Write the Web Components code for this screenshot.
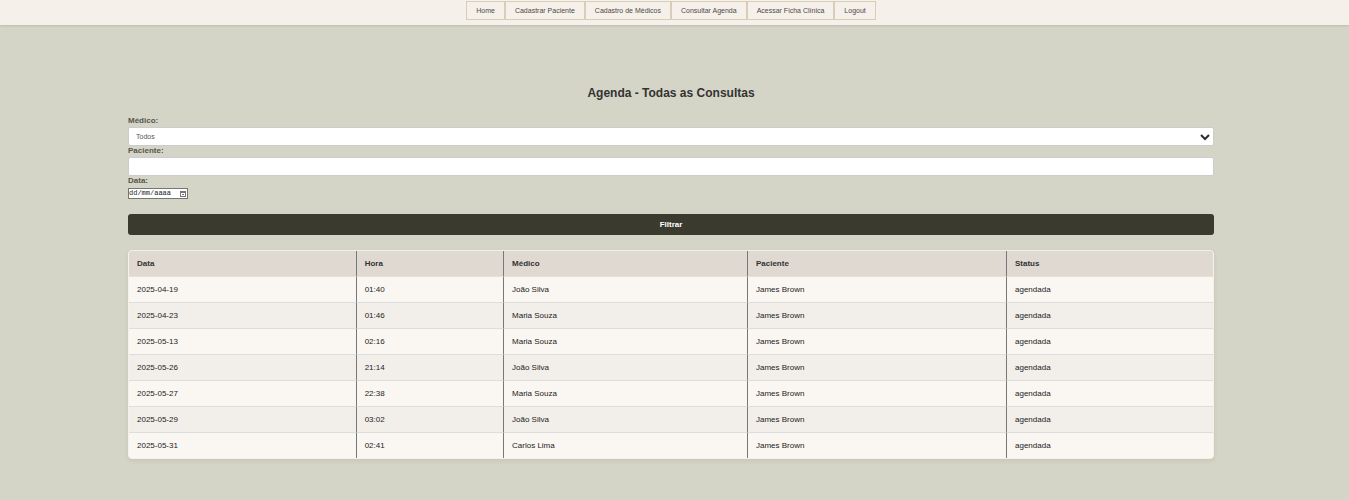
<!DOCTYPE html>
<html lang="pt-BR">
<head>
<meta charset="utf-8">
<meta name="viewport" content="width=device-width, initial-scale=1">
<title>Agenda - Todas as Consultas</title>
<style>
  html { background: #d5d5c7; }
  body { margin: 0; font-family: "Liberation Sans", Arial, sans-serif; color: #3a3a2e; }
</style>
</head>
<body>
<agenda-page>
  <nav-bar slot="nav">
    <nav-item href="#home">Home</nav-item>
    <nav-item href="#paciente">Cadastrar Paciente</nav-item>
    <nav-item href="#medicos">Cadastro de Médicos</nav-item>
    <nav-item href="#agenda">Consultar Agenda</nav-item>
    <nav-item href="#ficha">Acessar Ficha Clínica</nav-item>
    <nav-item href="#logout">Logout</nav-item>
  </nav-bar>
  <span slot="title">Agenda - Todas as Consultas</span>
  <filter-form></filter-form>
  <agenda-table></agenda-table>
</agenda-page>

<script>
  class BaseElement extends HTMLElement {
    constructor() {
      super();
      this.attachShadow({ mode: "open" });
    }
    connectedCallback() {
      this.shadowRoot.innerHTML = this.render();
    }
  }

  customElements.define("agenda-page", class extends BaseElement {
    render() {
      return `
        <style>
          :host { display: block; }
          /* right side keeps a gutter for the scroll bar */
          main { padding: 61px 135px 41px 128px; }
          h1 { margin: 0 0 16px; font-size: 12px; line-height: 14px; font-weight: bold; text-align: center; color: #333; }
        </style>
        <slot name="nav"></slot>
        <main>
          <h1><slot name="title"></slot></h1>
          <slot></slot>
        </main>`;
    }
  });

  customElements.define("nav-bar", class extends BaseElement {
    render() {
      return `
        <style>
          :host { display: block; background: #f5f0ea; box-shadow: 0 1px 2px rgba(0, 0, 0, .12); }
          nav { display: flex; justify-content: center; padding: 1px 7px 5px 0; }
        </style>
        <nav><slot></slot></nav>`;
    }
  });

  customElements.define("nav-item", class extends BaseElement {
    render() {
      return `
        <style>
          :host { display: block; }
          a { display: block; padding: 0 9px; border: 1px solid #d8ceb8; font-size: 7px; line-height: 17px; color: #4d4a42; text-decoration: none; white-space: nowrap; }
        </style>
        <a href="${this.getAttribute("href")}"><slot></slot></a>`;
    }
  });

  const LABEL_STYLE = `
    :host { display: block; }
    label { display: block; margin-bottom: 2px; font-size: 8px; line-height: 9px; font-weight: bold; color: #55554b; }
  `;
  const BOX_STYLE = `
    box-sizing: border-box; display: block; width: 100%; height: 19px; margin: 0; padding: 0 7px;
    border: 1px solid #ccc; border-radius: 2px; background: #fff; color: #555; font: 7px "Liberation Sans", Arial, sans-serif;
  `;

  customElements.define("select-field", class extends BaseElement {
    render() {
      return `
        <style>
          ${LABEL_STYLE}
          .box { display: grid; align-items: center; }
          .box > * { grid-area: 1 / 1; }
          select { ${BOX_STYLE} appearance: none; }
          svg { justify-self: end; margin-right: 4px; width: 10px; height: 8px; pointer-events: none; }
        </style>
        <label for="control">${this.getAttribute("label")}</label>
        <div class="box">
          <select id="control"><option>Todos</option></select>
          <svg viewBox="0 0 10 8" aria-hidden="true"><path d="M1 2l4 4 4-4" fill="none" stroke="#2d2d32" stroke-width="2"/></svg>
        </div>`;
    }
  });

  customElements.define("text-field", class extends BaseElement {
    render() {
      return `
        <style>
          ${LABEL_STYLE}
          input { ${BOX_STYLE} }
        </style>
        <label for="control">${this.getAttribute("label")}</label>
        <input id="control" type="text">`;
    }
  });

  customElements.define("date-field", class extends BaseElement {
    render() {
      return `
        <style>
          ${LABEL_STYLE}
          label { margin-bottom: 3px; }
          .box { box-sizing: border-box; display: flex; align-items: center; width: 60px; height: 11px; padding-right: 1px; border: 1px solid #767670; background: #fff; }
          input { flex: 1; min-width: 0; height: 9px; margin: 0; padding: 0; border: 0; background: none; font: 7px/9px "Liberation Mono", "Courier New", monospace; color: #222; }
          input::placeholder { color: #222; opacity: 1; }
          svg { flex: none; width: 6px; height: 6px; }
        </style>
        <label for="control">${this.getAttribute("label")}</label>
        <div class="box">
          <input id="control" type="text" placeholder="dd/mm/aaaa">
          <svg viewBox="0 0 6 6" aria-hidden="true"><rect x=".5" y=".5" width="5" height="5" fill="none" stroke="#777"/><path d="M1 1.5h4M2 3.5h2" stroke="#777"/></svg>
        </div>`;
    }
  });

  customElements.define("filter-form", class extends BaseElement {
    render() {
      return `
        <style>
          :host { display: block; }
          form { margin: 0 0 15px; }
          button { display: block; width: 100%; height: 21px; margin: 15px 0 0; padding: 0; border: 0; border-radius: 3px; background: #3b3a2e; color: #fff; font: bold 8px "Liberation Sans", Arial, sans-serif; }
        </style>
        <form>
          <select-field label="Médico:"></select-field>
          <text-field label="Paciente:"></text-field>
          <date-field label="Data:"></date-field>
          <button type="button">Filtrar</button>
        </form>`;
    }
  });

  const COLUMNS = [["Data", 21], ["Hora", 13.6], ["Médico", 22.5], ["Paciente", 23.9], ["Status", 19]];
  const ROWS = [
    ["2025-04-19", "01:40", "João Silva"],
    ["2025-04-23", "01:46", "Maria Souza"],
    ["2025-05-13", "02:16", "Maria Souza"],
    ["2025-05-26", "21:14", "João Silva"],
    ["2025-05-27", "22:38", "Maria Souza"],
    ["2025-05-29", "03:02", "João Silva"],
    ["2025-05-31", "02:41", "Carlos Lima"]
  ].map(row => [...row, "James Brown", "agendada"]);

  customElements.define("agenda-table", class extends BaseElement {
    render() {
      return `
        <style>
          :host { display: block; overflow: hidden; border: 1px solid #f5f1e9; border-radius: 4px; box-shadow: 0 2px 5px rgba(0, 0, 0, .08); background: #faf7f2; }
          table { width: 100%; table-layout: fixed; border-collapse: separate; border-spacing: 0; font-size: 8px; line-height: 9px; color: #222; }
          th, td { box-sizing: border-box; height: 26px; padding: 0 8px; border-bottom: 1px solid #ddd; text-align: left; vertical-align: middle; }
          th { background: #e0d9d2; border-bottom-color: #e6e1db; color: #333; }
          th:not(:last-child), td:not(:last-child) { border-right: 1px solid #777; }
          tbody tr:nth-child(even) { background: #f2efea; }
          tbody tr:last-child td { height: 25px; border-bottom: 0; }
        </style>
        <table>
          <colgroup>${COLUMNS.map(c => `<col style="width:${c[1]}%">`).join("")}</colgroup>
          <thead><tr>${COLUMNS.map(c => `<th scope="col">${c[0]}</th>`).join("")}</tr></thead>
          <tbody>${ROWS.map(r => `<tr>${r.map(v => `<td>${v}</td>`).join("")}</tr>`).join("")}</tbody>
        </table>`;
    }
  });
</script>
</body>
</html>
